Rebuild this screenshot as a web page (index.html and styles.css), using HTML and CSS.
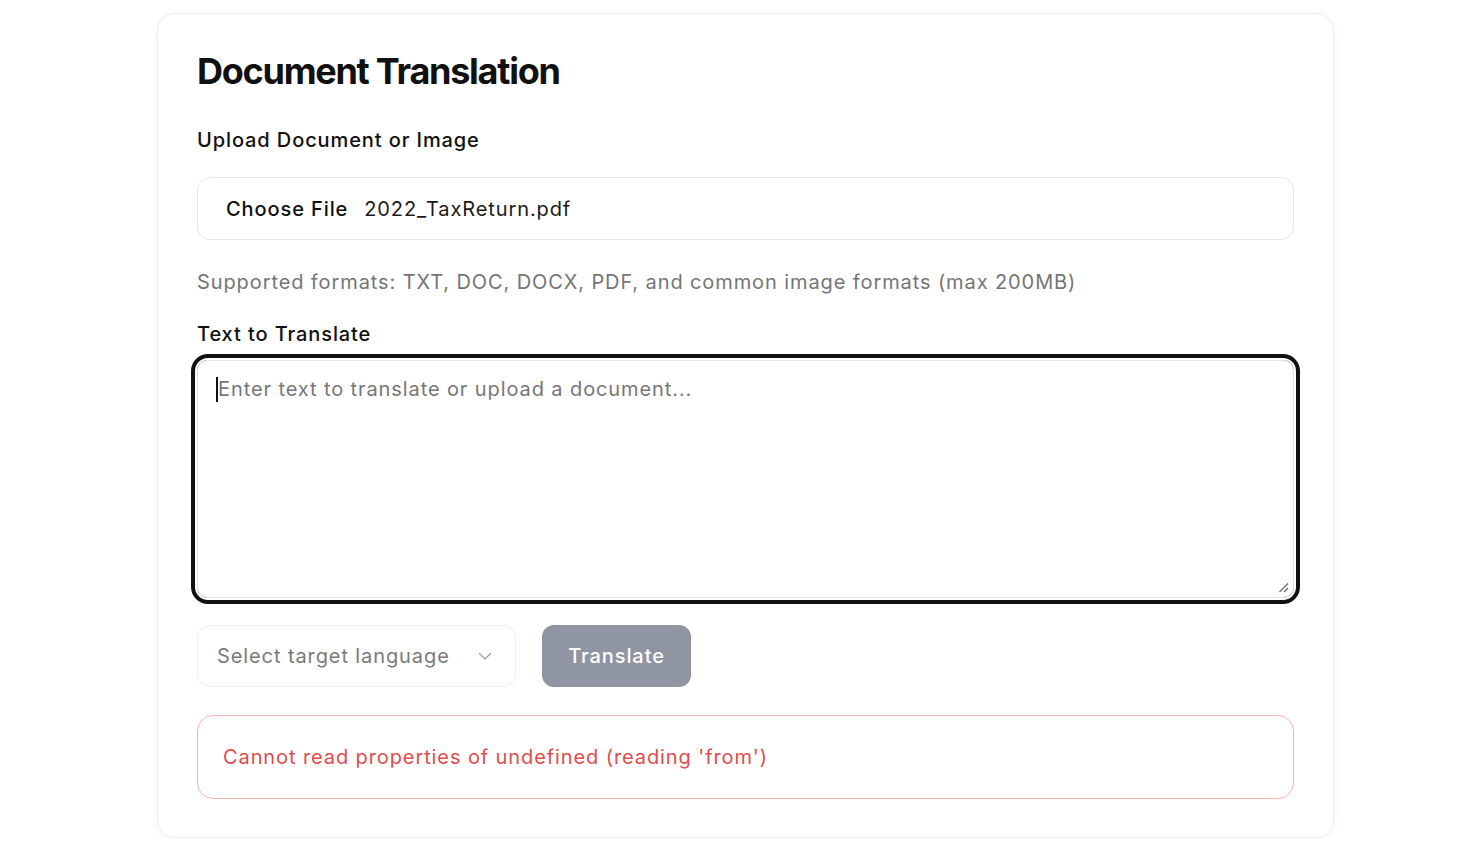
FILE: index.html
```html
<!DOCTYPE html>
<html lang="en">
<head>
<meta charset="utf-8">
<title>Document Translation</title>
<link rel="stylesheet" href="styles.css">
</head>
<body>
<main class="page">
  <section class="card">
    <h1 class="title">Document Translation</h1>
    <label class="label label-upload">Upload Document or Image</label>
    <div class="file-box">
      <span class="file-btn">Choose File</span>
      <span class="file-name">2022_TaxReturn.pdf</span>
    </div>
    <p class="hint">Supported formats: TXT, DOC, DOCX, PDF, and common image formats (max 200MB)</p>
    <label class="label label-text">Text to Translate</label>
    <div class="textarea">
      <span class="caret"></span><span class="placeholder">Enter text to translate or upload a document...</span>
      <svg class="grip" width="12" height="12" viewBox="0 0 12 12"><path d="M11 2.5 L2.5 11 M11 7 L7 11" stroke="#666" stroke-width="1.1" fill="none"/></svg>
    </div>
    <div class="actions">
      <div class="select">
        <span>Select target language</span>
        <svg class="chev" width="16" height="16" viewBox="0 0 16 16"><path d="M2.5 5.5 L8 11 L13.5 5.5" stroke="#a0a0a0" stroke-width="1.3" fill="none" stroke-linecap="round" stroke-linejoin="round"/></svg>
      </div>
      <button class="btn">Translate</button>
    </div>
    <div class="error">Cannot read properties of undefined (reading 'from')</div>
  </section>
</main>
</body>
</html>
```
FILE: styles.css
```css
* { box-sizing: border-box; }
html, body { margin: 0; padding: 0; background: #ffffff; }
body { font-family: Inter, "Noto Sans", sans-serif; color: #111; }
.page { padding: 13px 0 0 157px; }
.card {
  width: 1177px;
  height: 825px;
  background: #fff;
  border: 1px solid #ececec;
  border-radius: 18px;
  box-shadow: 0 2px 8px rgba(0,0,0,0.04);
  padding: 37px 39px 0 39px;
  display: flex;
  flex-direction: column;
}
.title {
  margin: 0;
  font-size: 36px;
  line-height: 40px;
  font-weight: 700;
  letter-spacing: -0.035em;
  color: #111;
}
.label {
  display: block;
  font-size: 20px;
  line-height: 28px;
  font-weight: 500;
  letter-spacing: 0.9px;
  color: #111;
}
.label-upload { margin-top: 35px; }
.file-box {
  margin-top: 23px;
  height: 63px;
  border: 1px solid #e6e6e6;
  border-radius: 13px;
  display: flex;
  align-items: center;
  padding-left: 28px;
  font-size: 20px;
  letter-spacing: 0.9px;
}
.file-btn { font-weight: 500; margin-right: 16px; }
.file-name { color: #1a1a1a; }
.hint {
  margin: 28px 0 0;
  font-size: 20px;
  line-height: 28px;
  letter-spacing: 0.9px;
  color: #757575;
}
.label-text { margin-top: 24px; }
.textarea {
  position: relative;
  margin-top: 12px;
  height: 238px;
  border: 1px solid #e2e2e2;
  border-radius: 11px;
  box-shadow: 0 0 0 2px #fff, 0 0 0 6px #111;
  padding: 14px 18px;
  font-size: 20px;
  line-height: 28px;
  letter-spacing: 0.9px;
  display: flex;
  align-items: flex-start;
}
.caret {
  display: inline-block;
  width: 2px;
  height: 25px;
  background: #111;
  margin-top: 2px;
}
.placeholder { color: #777; }
.grip { position: absolute; right: 4px; bottom: 4px; }
.actions {
  margin-top: 27px;
  display: flex;
  gap: 26px;
}
.select {
  width: 319px;
  height: 62px;
  border: 1px solid #f0f0f0;
  border-radius: 13px;
  display: flex;
  align-items: center;
  justify-content: space-between;
  padding: 0 22px 0 19px;
  font-size: 20px;
  letter-spacing: 0.9px;
  color: #7a7a7a;
}
.btn {
  width: 149px;
  height: 62px;
  border: none;
  border-radius: 12px;
  background: #8f95a3;
  color: #fff;
  font-family: inherit;
  font-size: 20px;
  font-weight: 500;
  letter-spacing: 0.9px;
}
.error {
  margin-top: 28px;
  height: 84px;
  border: 1px solid #f6b3b3;
  border-radius: 16px;
  display: flex;
  align-items: center;
  padding-left: 25px;
  font-size: 20px;
  letter-spacing: 0.9px;
  color: #e04d4d;
}
```
